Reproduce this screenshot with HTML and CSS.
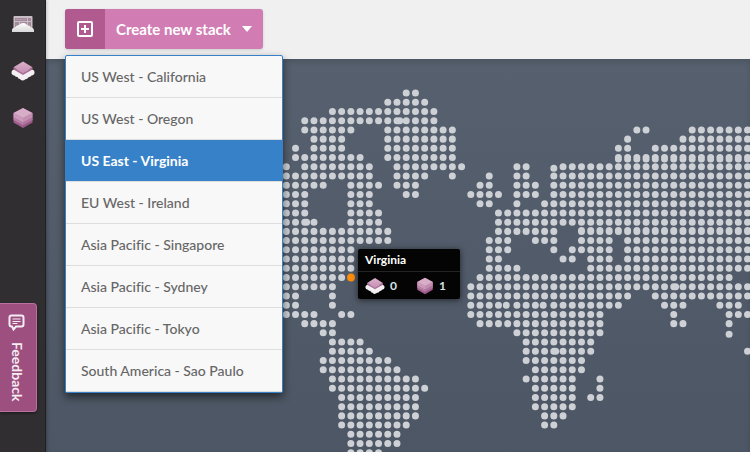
FILE: index.html
```html
<!DOCTYPE html>
<html lang="en">
<head>
<meta charset="utf-8">
<title>Stacks</title>
<link rel="stylesheet" href="styles.css">
</head>
<body>
<svg class="defs" aria-hidden="true">
  <defs>
    <linearGradient id="cloud" x1="0" y1="0" x2="0" y2="1"><stop offset="0" stop-color="#fff"/><stop offset="1" stop-color="#d9d7d9"/></linearGradient>
    <linearGradient id="top" x1="0" y1="0" x2="0" y2="1"><stop offset="0" stop-color="#dcb0cc"/><stop offset="1" stop-color="#c58fb2"/></linearGradient>
    <symbol id="stack-cloud" viewBox="0 0 24 20">
      <path d="M.5 11.500Q.5 8.500 4 8.500L20 8.500Q23.500 8.500 23.500 11.500Q23.500 14 20.500 14.500Q19.500 16 17.500 16.200Q16.500 18 14.500 18.200Q13 19.500 11.500 19.500Q9.500 19.200 9 18Q7 17.800 6.500 16Q4.500 16 3.500 14.500Q.5 14 .5 11.500Z" fill="#f3eff2"/>
      <path d="M2.500 6.500V8.500L12 14L21.500 8.500V6.500L12 11.500Z" fill="#ad6f9a"/>
      <path d="M12 .5L21.500 6.300L12 12L2.500 6.300Z" fill="url(#top)"/>
    </symbol>
    <symbol id="cube" viewBox="0 0 20 22">
      <path d="M10 1L19.500 6V15.500L10 21L.5 15.500V6Z" fill="#9f5c8c"/>
      <path d="M.5 6L10 11L19.500 6V10.500L10 15.500L.5 10.500Z" fill="#cb9aba"/>
      <path d="M.5 10.500L10 15.500L19.500 10.500V13L10 18L.5 13Z" fill="#b880a6"/>
      <path d="M10 11L19.500 6V15.500L10 21Z" fill="#854476" opacity=".12"/>
      <path d="M10 1L19.500 6L10 11L.5 6Z" fill="#d8adc8"/>
    </symbol>
  </defs>
</svg>
<div class="app">
  <nav class="sidebar" aria-label="Main">
    <a class="nav-link" href="#dashboard" aria-label="Dashboard">
      <svg width="22" height="18" viewBox="0 0 22 18">
        <rect x="1.500" y="1" width="19" height="15" rx="1" fill="#c9bdc6"/>
        <path d="M3 3h12v3H3zM16 3h3v3h-3zM3 7h4v5H3zM8 7h7v5H8zM16 7h3v5h-3z" fill="#a28a9a"/>
        <path d="M4 4h10v1H4zM9 8h5v3H9z" fill="#b69dae"/>
        <path d="M0 17v-2q0-2 3-2.500Q4 10 7 10Q9 7.500 12 8q2.500.5 3.500 2.500Q18 10 19 12.500q3 .5 3 3V17Z" fill="url(#cloud)"/>
      </svg>
    </a>
    <a class="nav-link" href="#stacks" aria-label="Stacks"><svg width="24" height="20"><use href="#stack-cloud"/></svg></a>
    <a class="nav-link" href="#cubes" aria-label="Cubes"><svg width="20" height="22"><use href="#cube"/></svg></a>
    <button class="feedback" type="button">
      <svg width="18" height="18" viewBox="0 0 18 18" fill="none" stroke="#f6edf3">
        <path d="M3.500 1.500h10q2 0 2 2v7q0 2-2 2H8L5.500 15.500 4 12.500h-.5q-2 0-2-2v-7q0-2 2-2Z" stroke-width="2"/>
        <path d="M4.500 5h8M4.500 7.500h8M4.500 9.500h5"/>
      </svg>
      <span class="feedback-label">Feedback</span>
    </button>
  </nav>
  <div class="content">
    <header class="toolbar">
      <button class="create" type="button" aria-expanded="true" aria-controls="regions">
        <span class="create-icon">
          <svg width="16" height="16" viewBox="0 0 16 16" fill="none" stroke="#fff" stroke-width="2"><rect x="1" y="1" width="14" height="14" rx="1"/><path d="M8 4v8M4 8h8"/></svg>
        </span>
        <span class="create-label">Create new stack</span>
        <svg class="caret" width="10" height="6" viewBox="0 0 10 6"><path d="M0 0h10L5 6Z" fill="#fff"/></svg>
      </button>
      <ul class="regions" id="regions">
        <li><button class="region" type="button">US West - California</button></li>
        <li><button class="region" type="button">US West - Oregon</button></li>
        <li><button class="region selected" type="button" aria-current="true">US East - Virginia</button></li>
        <li><button class="region" type="button">EU West - Ireland</button></li>
        <li><button class="region" type="button">Asia Pacific - Singapore</button></li>
        <li><button class="region" type="button">Asia Pacific - Sydney</button></li>
        <li><button class="region" type="button">Asia Pacific - Tokyo</button></li>
        <li><button class="region" type="button">South America - Sao Paulo</button></li>
      </ul>
    </header>
    <main class="stage">
      <svg class="map" role="img" aria-label="World map">
        <!-- One unit is one grid step; each subpath is a run of dots. -->
        <g transform="translate(240.300 34) scale(9.225)">
          <path class="dots" d="M13 0h1.100M11 1h4.100M5 2h11.100M2 3h14.100M12.300 3h.1
            M2 4h5.100M11 4h7.100M38 4h1.100M44 4h6.100
            M3 5h3.100M11 5h7.100M37 5h.1M43 5h7.100
            M1 6h.1M3 6h3.100M11 6h7.100M36 6h1.100M40 6h10.100
            M1 7h7.100M11 7h7.100M36 7h14.100M36 7.150h14.100
            M0 8h.1M2 8h7.100M12 8h7.100M25 8h1.100M29 8.150h.1M30 8h20.100
            M0 9h9.100M12 9h3.100M18 9h.1M22 9h.1M25 9h1.100M29 9h21.100
            M0 10h4.100M7 10h3.100M12 10h2.100M21 10h1.100M25 10h2.100M29 10h21.100
            M0 11h2.100M7 11h2.100M13 11h1.100M20 11h3.100M25 11h2.100M29 11h21.100
            M0 12h2.100M7 12h2.100M21 12h1.100M25 12h.1M28 12h22.100
            M0 13h2.100M7 13h3.100M23 13h27.100
            M0 14h3.100M2.200 14h.1M7 14h3.100M23 14h27.100
            M0 15h11.100M23 15h6.100M32 15h18.100M32 14.900h18.100
            M0 16h11.100M22 16h2.100M27 16h2.100M32 16h3.100M37 16h13.100
            M0 17h7.100M22 17h2.100M29 17h.1M31 17h4.100M37 17h13.100
            M0 18h7.100M22 18h1.100M30 18h1.100M33 18h2.100M37 18h13.100
            M0 19h7.100M22 19h3.100M33 19h17.100
            M0 20h6.100M21 20h27.100
            M0 21h5.100M20 21h30.100M42.200 21h.1
            M0 22h1.100M5 22h.1M20 22h17.100M40 22h10.100
            M0 23h1.100M5 23h.1M20 23h3.100M23.850 23h.1M25 23h2.100M27.850 23h.1M29 23h7.100M41 23h2.100M47 23h2.100
            M0 24h3.100M6 24h1.100M20 24h14.100M42 24h.1M48 24h2.100
            M2 25h3.100M21 25h13.100M42 25h1.100M48 25h.1
            M4 26h1.100M25 26h9.100M48 26.150h.1
            M5 27h3.100M26 27h7.100
            M5 28h4.100M26 28h7.100M29.200 28h.1M50 28h.1
            M4 29h7.100M26 29h6.100
            M4 30h8.100M27 30h5.100
            M5 31h9.100M26 31h5.100M34 31h.1
            M5 32h10.100M27 32h4.100M34 32h.1
            M6 33h8.100M27 33h4.100M33 33h1.100
            M6 34h8.100M27 34h4.100
            M6 35h8.100M28 35h2.100
            M6 36h7.100M28 36h1.100
            M7 37h5.100M7 38h5.100M7 39h3.100"/>
          <circle cx="7.020" cy="20" r=".43" fill="#ff8c0a"/>
        </g>
      </svg>
      <section class="tooltip">
        <h2 class="tooltip-title">Virginia</h2>
        <div class="counts">
          <span class="count"><svg width="20" height="18" viewBox="0 0 24 20"><use href="#stack-cloud" width="24" height="20"/></svg>0</span>
          <span class="count"><svg width="18" height="18" viewBox="0 0 20 22"><use href="#cube" width="20" height="22"/></svg>1</span>
        </div>
      </section>
    </main>
  </div>
</div>
</body>
</html>
```
FILE: styles.css
```css
* { box-sizing: border-box; }
body {
  margin: 0;
  font-family: Lato, "Liberation Sans", sans-serif;
  font-size: 14px;
  font-variant-ligatures: none;
  color: #666;
}
button { font: inherit; font-variant-ligatures: none; border: 0; cursor: pointer; }
.defs { position: absolute; width: 0; height: 0; }
.app { display: flex; min-height: 100vh; }

.sidebar {
  position: relative;
  z-index: 3;
  flex: none;
  width: 46px;
  display: flex;
  flex-direction: column;
  background: #312e31;
  border-right: 1px solid #201f22;
  box-shadow: 1px 0 3px rgba(0, 0, 0, .2);
}
.nav-link {
  display: flex;
  align-items: center;
  justify-content: center;
  height: 47px;
}
.feedback {
  position: absolute;
  left: 0;
  top: 303px;
  display: flex;
  flex-direction: column;
  align-items: center;
  gap: 10px;
  width: 37px;
  height: 109px;
  padding: 10px 2px 0 0;
  color: #f6edf3;
  background: #9d4f80;
  border: 1px solid #b7739d;
  border-left: 0;
  border-radius: 0 4px 4px 0;
  box-shadow: 0 1px 3px rgba(0, 0, 0, .5);
}
.feedback svg { flex: none; }
.feedback-label {
  writing-mode: vertical-rl;
  line-height: 16px;
  font-weight: 700;
}

.content { flex: 1; min-width: 0; display: flex; flex-direction: column; }
.toolbar {
  position: relative;
  z-index: 2;
  height: 59px;
  padding: 9px 19px;
  background: #f0f0f0;
}
.create {
  display: flex;
  align-items: center;
  height: 40px;
  padding: 0 11px 0 0;
  overflow: hidden;
  color: #fff;
  background: #d17db4;
  border-radius: 3px;
  box-shadow: 0 1px 3px rgba(0, 0, 0, .15);
  font-size: 15px;
  font-weight: 700;
}
.create-icon {
  display: flex;
  align-items: center;
  justify-content: center;
  width: 40px;
  height: 40px;
  background: #b05a90;
}
.create-label { margin: 0 11px; }
.regions {
  position: absolute;
  left: 19px;
  top: 55px;
  width: 218px;
  margin: 0;
  padding: 0;
  list-style: none;
  background: #f8f8f8;
  border: 1px solid #3781c8;
  border-radius: 2px;
  box-shadow: 0 4px 8px rgba(0, 0, 0, .55);
}
.region {
  display: block;
  width: 100%;
  height: 42px;
  padding: 0 15px;
  text-align: left;
  font-weight: 500;
  color: #666;
  background: none;
  border-bottom: 1px solid #ddd;
}
.region.selected {
  color: #fff;
  font-weight: 700;
  background: #3781c8;
}

.stage {
  position: relative;
  flex: 1;
  overflow: hidden;
  background: linear-gradient(#56606e, #4d5664);
  box-shadow: inset 0 3px 5px rgba(0, 0, 0, .12);
}
.map { position: absolute; left: 0; top: 0; width: 100%; height: 100%; }
.dots {
  fill: none;
  stroke: #cdd0d4;
  stroke-width: .76;
  stroke-linecap: round;
  stroke-dasharray: 0 1;
}
.tooltip {
  position: absolute;
  left: 312px;
  top: 190px;
  width: 102px;
  color: #fff;
  background: #040404;
  border-radius: 2px;
  box-shadow: 0 1px 6px rgba(0, 0, 0, .6);
}
.tooltip-title {
  margin: 0;
  padding: 0 7px;
  font-size: 12px;
  line-height: 22px;
  font-weight: 700;
  border-bottom: 1px solid #242424;
}
.counts { display: flex; gap: 19px; height: 27px; padding: 0 7px; }
.count {
  display: flex;
  align-items: center;
  gap: 5px;
  font-size: 12px;
  font-weight: 700;
  color: #d5e0e8;
}
```
